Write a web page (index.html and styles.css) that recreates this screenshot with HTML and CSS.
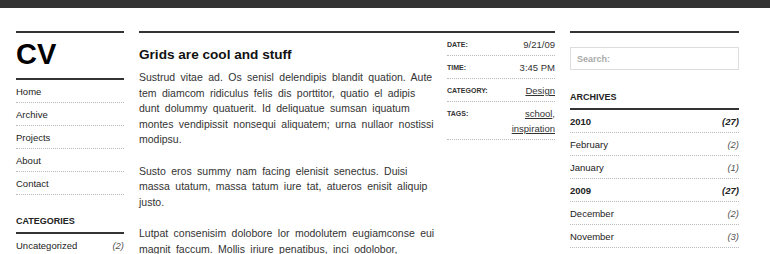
FILE: index.html
```html
<!DOCTYPE html>
<html>
  <head>
    <title>CV</title>
    <link rel="stylesheet" href="styles.css">
  </head>
  <body>
    <div class="topbar"></div>
    <div class="page">
      <aside class="sidebar">
        <h1 class="site-title">CV</h1>
        <ul class="nav">
          <li><a href="#">Home</a></li>
          <li><a href="#">Archive</a></li>
          <li><a href="#">Projects</a></li>
          <li><a href="#">About</a></li>
          <li><a href="#">Contact</a></li>
        </ul>
        <h2 class="widget-title">Categories</h2>
        <ul class="counts">
          <li><a href="#">Uncategorized</a><em>(2)</em></li>
        </ul>
      </aside>
      <article class="post">
        <div class="post-body">
          <h2 class="post-title">Grids are cool and stuff</h2>
          <p>Sustrud vitae ad. Os senisl delendipis blandit quation. Aute tem diamcom ridiculus felis dis porttitor, quatio el adipis dunt dolummy quatuerit. Id deliquatue sumsan iquatum montes vendipissit nonsequi aliquatem; urna nullaor nostissi modipsu.</p>
          <p>Susto eros summy nam facing elenisit senectus. Duisi massa utatum, massa tatum iure tat, atueros enisit aliquip justo.</p>
          <p>Lutpat consenisim dolobore lor modolutem eugiamconse eui magnit faccum. Mollis iriure penatibus, inci odolobor, consequatuerit nullamcorper.</p>
        </div>
        <dl class="meta">
          <div class="meta-row"><dt>Date:</dt><dd>9/21/09</dd></div>
          <div class="meta-row"><dt>Time:</dt><dd>3:45 PM</dd></div>
          <div class="meta-row"><dt>Category:</dt><dd><a href="#">Design</a></dd></div>
          <div class="meta-row"><dt>Tags:</dt><dd><a href="#">school</a>,<br><a href="#">inspiration</a></dd></div>
        </dl>
      </article>
      <aside class="extra">
        <input class="search" type="text" placeholder="Search:">
        <h2 class="widget-title">Archives</h2>
        <ul class="counts">
          <li class="year"><a href="#">2010</a><em>(27)</em></li>
          <li><a href="#">February</a><em>(2)</em></li>
          <li><a href="#">January</a><em>(1)</em></li>
          <li class="year"><a href="#">2009</a><em>(27)</em></li>
          <li><a href="#">December</a><em>(2)</em></li>
          <li><a href="#">November</a><em>(3)</em></li>
        </ul>
      </aside>
    </div>
  </body>
</html>
```

FILE: styles.css
```css
html, body {
  margin: 0;
  padding: 0;
  background: #fff;
  overflow: hidden;
}
body {
  font-family: "Liberation Sans", Arial, Helvetica, sans-serif;
  color: #222;
}
a {
  color: #222;
  text-decoration: none;
}
ul, dl, dd {
  margin: 0;
  padding: 0;
  list-style: none;
}
.topbar {
  height: 8px;
  background: #333;
}
.page {
  display: grid;
  grid-template-columns: 108px 416px 169px;
  column-gap: 15px;
  padding: 23px 0 0 16px;
  align-items: start;
}
.sidebar,
.post,
.extra {
  border-top: 2px solid #333;
}

/* left column */
.site-title {
  margin: 0;
  padding: 7px 0 9px;
  font-size: 29px;
  line-height: 29px;
  font-weight: bold;
  color: #000;
  border-bottom: 2px solid #333;
}
.nav li,
.counts li {
  font-size: 9.5px;
  line-height: 15px;
  padding: 4px 0 3px;
  border-bottom: 1px dotted #bbb;
}
.widget-title {
  margin: 20px 0 0;
  padding-bottom: 5px;
  font-size: 9px;
  line-height: 12px;
  font-weight: bold;
  text-transform: uppercase;
  color: #222;
  border-bottom: 2px solid #333;
}
.counts li {
  display: flex;
  justify-content: space-between;
}
.counts em {
  color: #555;
}
.counts .year {
  font-weight: bold;
}
.counts .year em {
  color: #222;
}

/* post */
.post {
  display: grid;
  grid-template-columns: 297px 108px;
  column-gap: 11px;
}
.post-title {
  margin: 13px 0 0;
  font-size: 13.6px;
  line-height: 18px;
  font-weight: bold;
  color: #111;
}
.post-body p {
  margin: 6px 0 16px;
  font-size: 10.5px;
  line-height: 15.5px;
  word-spacing: 2.5px;
  color: #333;
}
.post-body p + p {
  margin-top: 16px;
}
.meta-row {
  display: flex;
  justify-content: space-between;
  padding: 4px 0 3px;
  border-bottom: 1px dotted #bbb;
  line-height: 15px;
}
.meta dt {
  font-size: 7px;
  font-weight: bold;
  text-transform: uppercase;
  color: #333;
}
.meta dd {
  font-size: 9.5px;
  text-align: right;
  color: #333;
}
.meta dd a {
  text-decoration: underline;
  color: #333;
}

/* right column */
.search {
  display: block;
  box-sizing: border-box;
  width: 100%;
  height: 23px;
  margin: 14px 0 0;
  padding: 0 6px;
  border: 1px solid #ddd;
  font-family: inherit;
  font-size: 9px;
  font-weight: bold;
  color: #333;
  outline: none;
}
.search::placeholder {
  color: #aaa;
}
.extra .widget-title {
  margin-top: 21px;
}
```
